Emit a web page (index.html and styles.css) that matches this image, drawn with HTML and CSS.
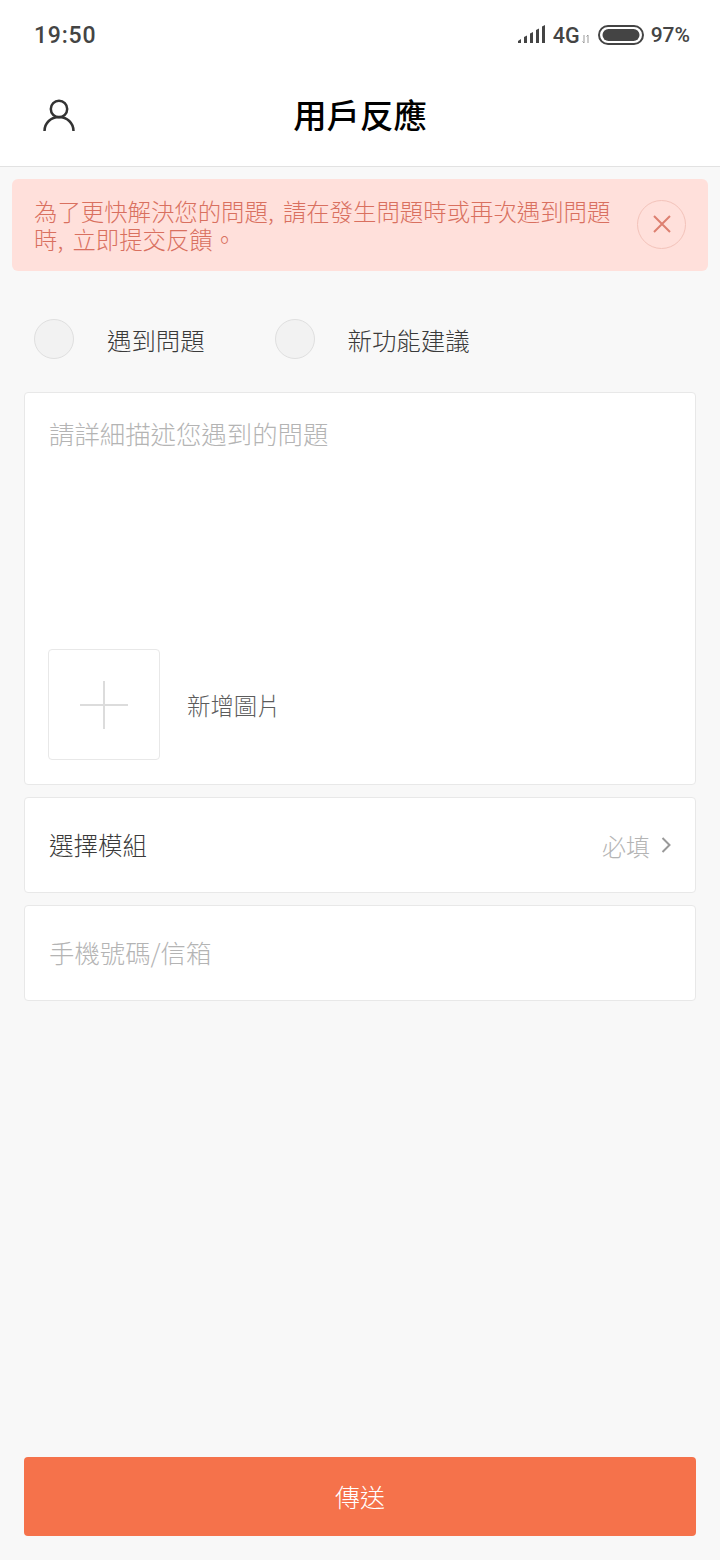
FILE: index.html
```html
<!DOCTYPE html>
<html lang="zh-Hant">
<head>
    <meta charset="UTF-8">
    <meta name="viewport" content="width=device-width, initial-scale=1.0">
    <title>用戶反應</title>
    <link rel="stylesheet" href="styles.css">
</head>
<body>
    <div class="page">
        <div class="statusbar">
            <div class="time">19:50</div>
            <div class="status-right">
                <svg class="signal" width="28" height="20" viewBox="0 0 28 20">
                    <path d="M0 19v-2l3-2v4zM6 19v-6l3-1.500V19zM12 19V9.500l3-1.500v11zM18 19V6l3-1.500V19zM24 19V2.500L27 1v18z" fill="#444"/>
                </svg>
                <span class="net">4G</span>
                <svg class="arrows" width="8" height="10" viewBox="0 0 8 10">
                    <path d="M2 1v8M0.500 7.500L2 9M6 9V1M4.500 2.500L6 1" stroke="#999" stroke-width="1" fill="none"/>
                </svg>
                <svg class="battery" width="46" height="20" viewBox="0 0 46 20">
                    <rect x="1" y="1" width="44" height="18" rx="9" fill="none" stroke="#444" stroke-width="2"/>
                    <rect x="4.500" y="4" width="37" height="12" rx="6" fill="#444"/>
                </svg>
                <span class="percent">97%</span>
            </div>
        </div>

        <div class="titlebar">
            <svg class="user-icon" width="34" height="36" viewBox="0 0 34 36">
                <circle cx="17" cy="11" r="8.200" fill="none" stroke="#333" stroke-width="2.500"/>
                <path d="M2.500 33c0-8 6.500-14 14.500-14s14.500 6 14.500 14" fill="none" stroke="#333" stroke-width="2.500"/>
            </svg>
            <h1 class="title">用戶反應</h1>
        </div>

        <div class="notice">
            <p class="notice-text">為了更快解決您的問題, 請在發生問題時或再次遇到問題時, 立即提交反饋。</p>
            <button class="notice-close">
                <svg width="20" height="20" viewBox="0 0 20 20">
                    <path d="M2 2l16 16M18 2L2 18" stroke="#dd7f70" stroke-width="2" fill="none"/>
                </svg>
            </button>
        </div>

        <div class="type-row">
            <label class="type-option"><span class="radio"></span><span>遇到問題</span></label>
            <label class="type-option"><span class="radio"></span><span>新功能建議</span></label>
        </div>

        <div class="card desc-card">
            <div class="placeholder">請詳細描述您遇到的問題</div>
            <div class="upload-row">
                <div class="upload-box">
                    <svg width="48" height="48" viewBox="0 0 48 48">
                        <path d="M24 0v48M0 24h48" stroke="#dcdcdc" stroke-width="2" fill="none"/>
                    </svg>
                </div>
                <span class="upload-label">新增圖片</span>
            </div>
        </div>

        <div class="card row-card">
            <span class="row-label">選擇模組</span>
            <span class="row-right">
                <span class="row-hint">必填</span>
                <svg width="10" height="16" viewBox="0 0 10 16">
                    <path d="M1.500 1l7 7-7 7" stroke="#999" stroke-width="2" fill="none"/>
                </svg>
            </span>
        </div>

        <div class="card row-card contact-card">
            <span class="placeholder">手機號碼/信箱</span>
        </div>

        <button class="send-btn">傳送</button>
    </div>
</body>
</html>
```

FILE: styles.css
```css
* {
    box-sizing: border-box;
}
body {
    margin: 0;
    background-color: #f8f8f8;
    font-family: "Noto Sans CJK TC", "Noto Sans", sans-serif;
    font-weight: 300;
}
.page {
    display: flex;
    flex-direction: column;
    height: 1560px;
    overflow: hidden;
}
.statusbar {
    display: flex;
    align-items: center;
    justify-content: space-between;
    height: 70px;
    padding: 0 30px 0 34px;
    background-color: #fff;
    color: #444;
    font-family: Roboto, sans-serif;
    font-weight: 500;
}
.time {
    font-size: 23px;
    letter-spacing: 0.8px;
}
.status-right {
    display: flex;
    align-items: center;
    font-size: 21px;
}
.signal {
    margin: -2px 7px 0 0;
}
.net {
    font-size: 21.500px;
}
.arrows {
    margin: 8px 8px 0 2px;
}
.battery {
    margin-right: 7px;
}
.titlebar {
    position: relative;
    display: flex;
    align-items: center;
    justify-content: center;
    height: 97px;
    padding-bottom: 10px;
    background-color: #fff;
    border-bottom: 1px solid #e2e2e2;
}
.user-icon {
    position: absolute;
    left: 42px;
    top: 28px;
}
.title {
    margin: 0;
    font-size: 33.400px;
    font-weight: 500;
    color: #000;
}
.notice {
    display: flex;
    align-items: center;
    justify-content: space-between;
    height: 92px;
    margin: 12px 12px 0;
    padding: 0 22px;
    background-color: #ffe0db;
    border-radius: 6px;
}
.notice-text {
    width: 590px;
    margin: 0;
    font-size: 23.400px;
    line-height: 28px;
    word-spacing: 4px;
    color: #d9705f;
}
.notice-close {
    display: flex;
    align-items: center;
    justify-content: center;
    width: 49px;
    height: 49px;
    margin-bottom: 2px;
    padding: 0;
    background: none;
    border: 1px solid #f3c3ba;
    border-radius: 50%;
}
.type-row {
    display: flex;
    gap: 70px;
    margin: 48px 34px 0;
}
.type-option {
    display: flex;
    align-items: center;
    gap: 33px;
    font-size: 24.400px;
    color: #3a3a3a;
}
.radio {
    width: 40px;
    height: 40px;
    background-color: #f2f2f2;
    border: 1px solid #dfdfdf;
    border-radius: 50%;
}
.card {
    margin: 0 24px;
    background-color: #fff;
    border: 1px solid #e8e8e8;
    border-radius: 4px;
}
.placeholder {
    padding-bottom: 3px;
    font-size: 25.400px;
    color: #b4b4b4;
}
.desc-card {
    display: flex;
    flex-direction: column;
    justify-content: space-between;
    height: 393px;
    margin-top: 33px;
    padding: 22px 24px 24px 23px;
}
.desc-card .placeholder {
    padding-left: 1px;
}
.upload-row {
    display: flex;
    align-items: center;
    gap: 27px;
}
.upload-box {
    display: flex;
    align-items: center;
    justify-content: center;
    width: 112px;
    height: 111px;
    border: 1px solid #e8e8e8;
    border-radius: 4px;
}
.upload-label {
    font-size: 23.400px;
    color: #5c5c5c;
}
.row-card {
    display: flex;
    align-items: center;
    justify-content: space-between;
    height: 96px;
    margin-top: 12px;
    padding: 0 24px;
}
.row-label {
    padding-bottom: 2px;
    font-size: 24.500px;
    color: #3a3a3a;
}
.row-right {
    display: flex;
    align-items: center;
    gap: 11px;
}
.row-hint {
    font-size: 24px;
    color: #b4b4b4;
}
.send-btn {
    height: 79px;
    margin: auto 24px 24px;
    padding-bottom: 3px;
    background-color: #f5724b;
    border: none;
    border-radius: 4px;
    font-family: inherit;
    font-weight: 300;
    font-size: 25px;
    color: #fff;
}
```
